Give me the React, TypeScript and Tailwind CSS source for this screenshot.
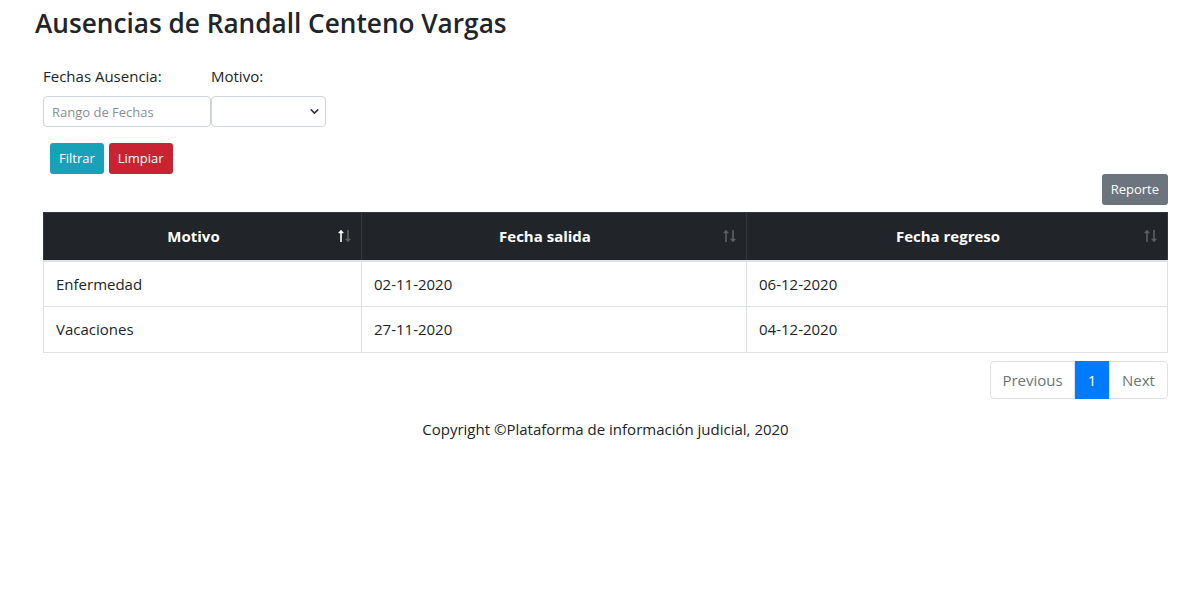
import { ChevronDown } from "lucide-react";

const rows = [
  { motivo: "Enfermedad", salida: "02-11-2020", regreso: "06-12-2020" },
  { motivo: "Vacaciones", salida: "27-11-2020", regreso: "04-12-2020" },
];

function SortIcon({ active }: { active?: boolean }) {
  return (
    <svg className="absolute right-[9px] top-1/2 -translate-y-1/2" width="14" height="14" viewBox="0 0 14 14">
      <g stroke={active ? "#ffffff" : "#5c6166"} strokeWidth="1.6" fill={active ? "#ffffff" : "#5c6166"}>
        <line x1="3" y1="3" x2="3" y2="13" />
        <path d="M0.5 4 L3 1 L5.5 4 Z" strokeWidth="0.5" />
      </g>
      <g stroke="#5c6166" strokeWidth="1.6" fill="#5c6166">
        <line x1="10" y1="1" x2="10" y2="11" />
        <path d="M7.5 10 L10 13 L12.5 10 Z" strokeWidth="0.5" />
      </g>
    </svg>
  );
}

export default function App() {
  return (
    <div className="min-h-[592px] bg-white text-[#212529] font-['Open_Sans','Noto_Sans',sans-serif]">
      <div className="pl-[35px] pr-[18px] pt-[6px]">
        {/* Titulo */}
        <h3 className="text-[26.2px] font-semibold leading-[34px]">Ausencias de Randall Centeno Vargas</h3>

        <div className="ml-2">
          {/* Filtros */}
          <div className="mt-[24px] flex">
            <div className="w-[168px]">
              <label className="block text-[15px] leading-6 mb-2">Fechas Ausencia:</label>
              <input
                placeholder="Rango de Fechas"
                className="h-[31px] w-full rounded-[4px] border border-[#ced4da] px-2 text-[13px] placeholder:text-[#8a9096] outline-none"
              />
            </div>
            <div className="w-[115px]">
              <label className="block text-[15px] leading-6 mb-2">Motivo:</label>
              <div className="relative h-[31px] w-full rounded-[4px] border border-[#ced4da]">
                <ChevronDown className="absolute right-[4px] top-[8px] h-[13px] w-[13px] text-[#343a40]" strokeWidth={3} />
              </div>
            </div>
          </div>

          <div className="mt-4 ml-[7px] flex gap-[5px]">
            <button className="h-[31px] rounded-[3px] bg-[#17a2b8] px-[9px] text-[13px] text-white">Filtrar</button>
            <button className="h-[31px] rounded-[3px] bg-[#c82333] px-[9px] text-[13px] text-white">Limpiar</button>
          </div>

          <div className="flex justify-end">
            <button className="h-[31px] rounded-[3px] bg-[#6c757d] px-[9px] text-[13px] text-white">Reporte</button>
          </div>

          {/* Tabla */}
          <table className="mt-[7px] w-full border-collapse border border-[#dee2e6] text-[15px]">
            <thead>
              <tr className="h-[48px] bg-[#212529] text-white">
                <th className="relative w-[318px] border border-[#32383e] border-b-2 border-b-[#dee2e6] pl-3 pr-[30px] font-bold">
                  Motivo
                  <SortIcon active />
                </th>
                <th className="relative w-[385px] border border-[#32383e] border-b-2 border-b-[#dee2e6] pl-3 pr-[30px] font-bold">
                  Fecha salida
                  <SortIcon />
                </th>
                <th className="relative border border-[#32383e] border-b-2 border-b-[#dee2e6] pl-3 pr-[30px] font-bold">
                  Fecha regreso
                  <SortIcon />
                </th>
              </tr>
            </thead>
            <tbody>
              {rows.map((r) => (
                <tr key={r.motivo} className="h-[46px]">
                  <td className="border border-[#dee2e6] px-3">{r.motivo}</td>
                  <td className="border border-[#dee2e6] px-3">{r.salida}</td>
                  <td className="border border-[#dee2e6] px-3">{r.regreso}</td>
                </tr>
              ))}
            </tbody>
          </table>

          {/* Paginacion */}
          <div className="mt-[8px] flex justify-end">
            <div className="flex h-[38px] text-[15px]">
              <span className="flex w-[85px] items-center justify-center rounded-l-[4px] border border-[#dee2e6] text-[#6c757d]">Previous</span>
              <span className="flex w-[34px] items-center justify-center bg-[#007bff] text-white">1</span>
              <span className="flex w-[59px] items-center justify-center rounded-r-[4px] border border-[#dee2e6] text-[#6c757d]">Next</span>
            </div>
          </div>

          <p className="mt-[18px] text-center text-[15px] leading-6">Copyright ©Plataforma de información judicial, 2020</p>
        </div>
      </div>
    </div>
  );
}
